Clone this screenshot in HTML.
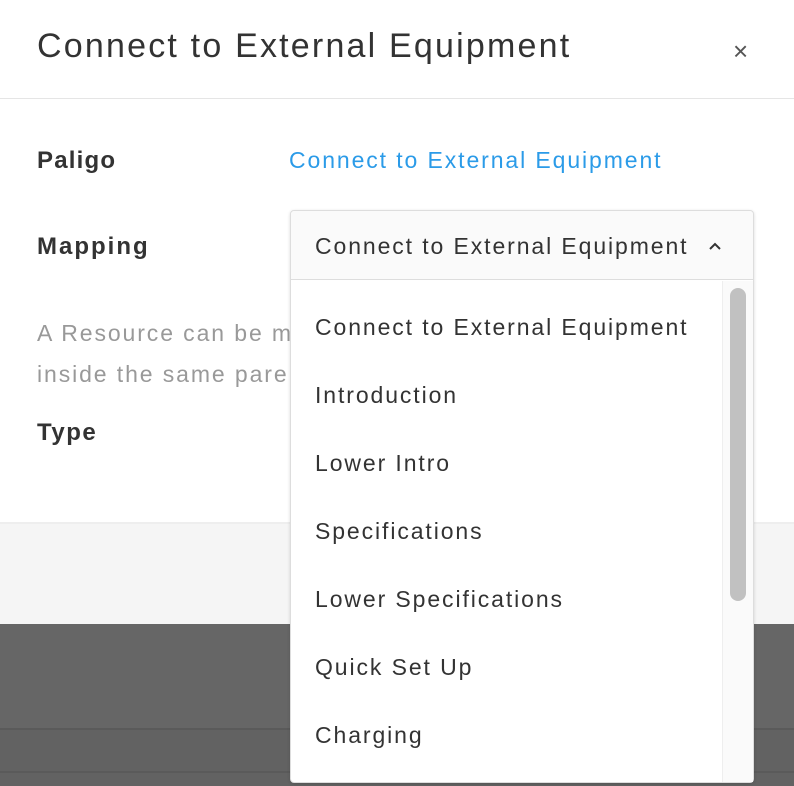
<!DOCTYPE html>
<html><head><meta charset="utf-8"><style>
*{margin:0;padding:0;box-sizing:border-box}
body{width:794px;height:786px;overflow:hidden;position:relative;background:#fff;font-family:"Liberation Sans",sans-serif;color:#333}
.abs{position:absolute;white-space:nowrap}
.t{letter-spacing:1.9px}
</style></head><body>
<div class="abs" style="left:0;top:0;width:794px;height:99px;border-bottom:1px solid #e5e5e5"></div>
<div class="abs" style="left:37px;top:27px;font-size:34px;color:#333;letter-spacing:2.2px">Connect to External Equipment</div>
<div class="abs" style="left:733px;top:36px;font-size:26px;color:#555">×</div>
<div class="abs" style="left:37px;top:147px;font-size:24px;font-weight:bold;letter-spacing:1.2px">Paligo</div>
<div class="abs t" style="left:289px;top:147px;font-size:23px;color:#2b9be8">Connect to External Equipment</div>
<div class="abs" style="left:37px;top:233px;font-size:24px;font-weight:bold;letter-spacing:2px">Mapping</div>
<div class="abs t" style="left:37px;top:313px;font-size:23px;color:#999;line-height:41px">A Resource can be mapped<br>inside the same parent</div>
<div class="abs" style="left:37px;top:419px;font-size:24px;font-weight:bold;letter-spacing:1.5px">Type</div>
<div class="abs" style="left:0;top:522px;width:794px;height:102px;background:#f5f5f5;border-top:2px solid #eee"></div>
<div class="abs" style="left:0;top:624px;width:794px;height:104px;background:#666"></div>
<div class="abs" style="left:0;top:728px;width:794px;height:58px;background:#626262;border-top:2px solid #5a5a5a"></div>
<div class="abs" style="left:0;top:771px;width:794px;height:2px;background:#5a5a5a"></div>
<div class="abs" style="left:290px;top:210px;width:464px;height:573px;background:#fff;border:1px solid #ddd;border-radius:4px;box-shadow:0 1px 3px rgba(0,0,0,.15)"></div>
<div class="abs" style="left:291px;top:211px;width:462px;height:69px;background:#fafafa;border-bottom:1px solid #ddd;border-radius:4px 4px 0 0"></div>
<div class="abs t" style="left:315px;top:233px;font-size:23px;color:#333">Connect to External Equipment</div>
<svg class="abs" style="left:707px;top:240px" width="16" height="12"><path d="M3 9 L8 4 L13 9" stroke="#333" stroke-width="2" fill="none"/></svg>
<div class="abs" style="left:722px;top:281px;width:31px;height:501px;background:#fafafa;border-left:1px solid #eee"></div>
<div class="abs" style="left:730px;top:288px;width:16px;height:313px;background:#c1c1c1;border-radius:8px"></div>
<div class="abs t" style="left:315px;top:293px;font-size:23px;line-height:68px;color:#333">Connect to External Equipment<br>Introduction<br>Lower Intro<br>Specifications<br>Lower Specifications<br>Quick Set Up<br>Charging</div>
</body></html>
